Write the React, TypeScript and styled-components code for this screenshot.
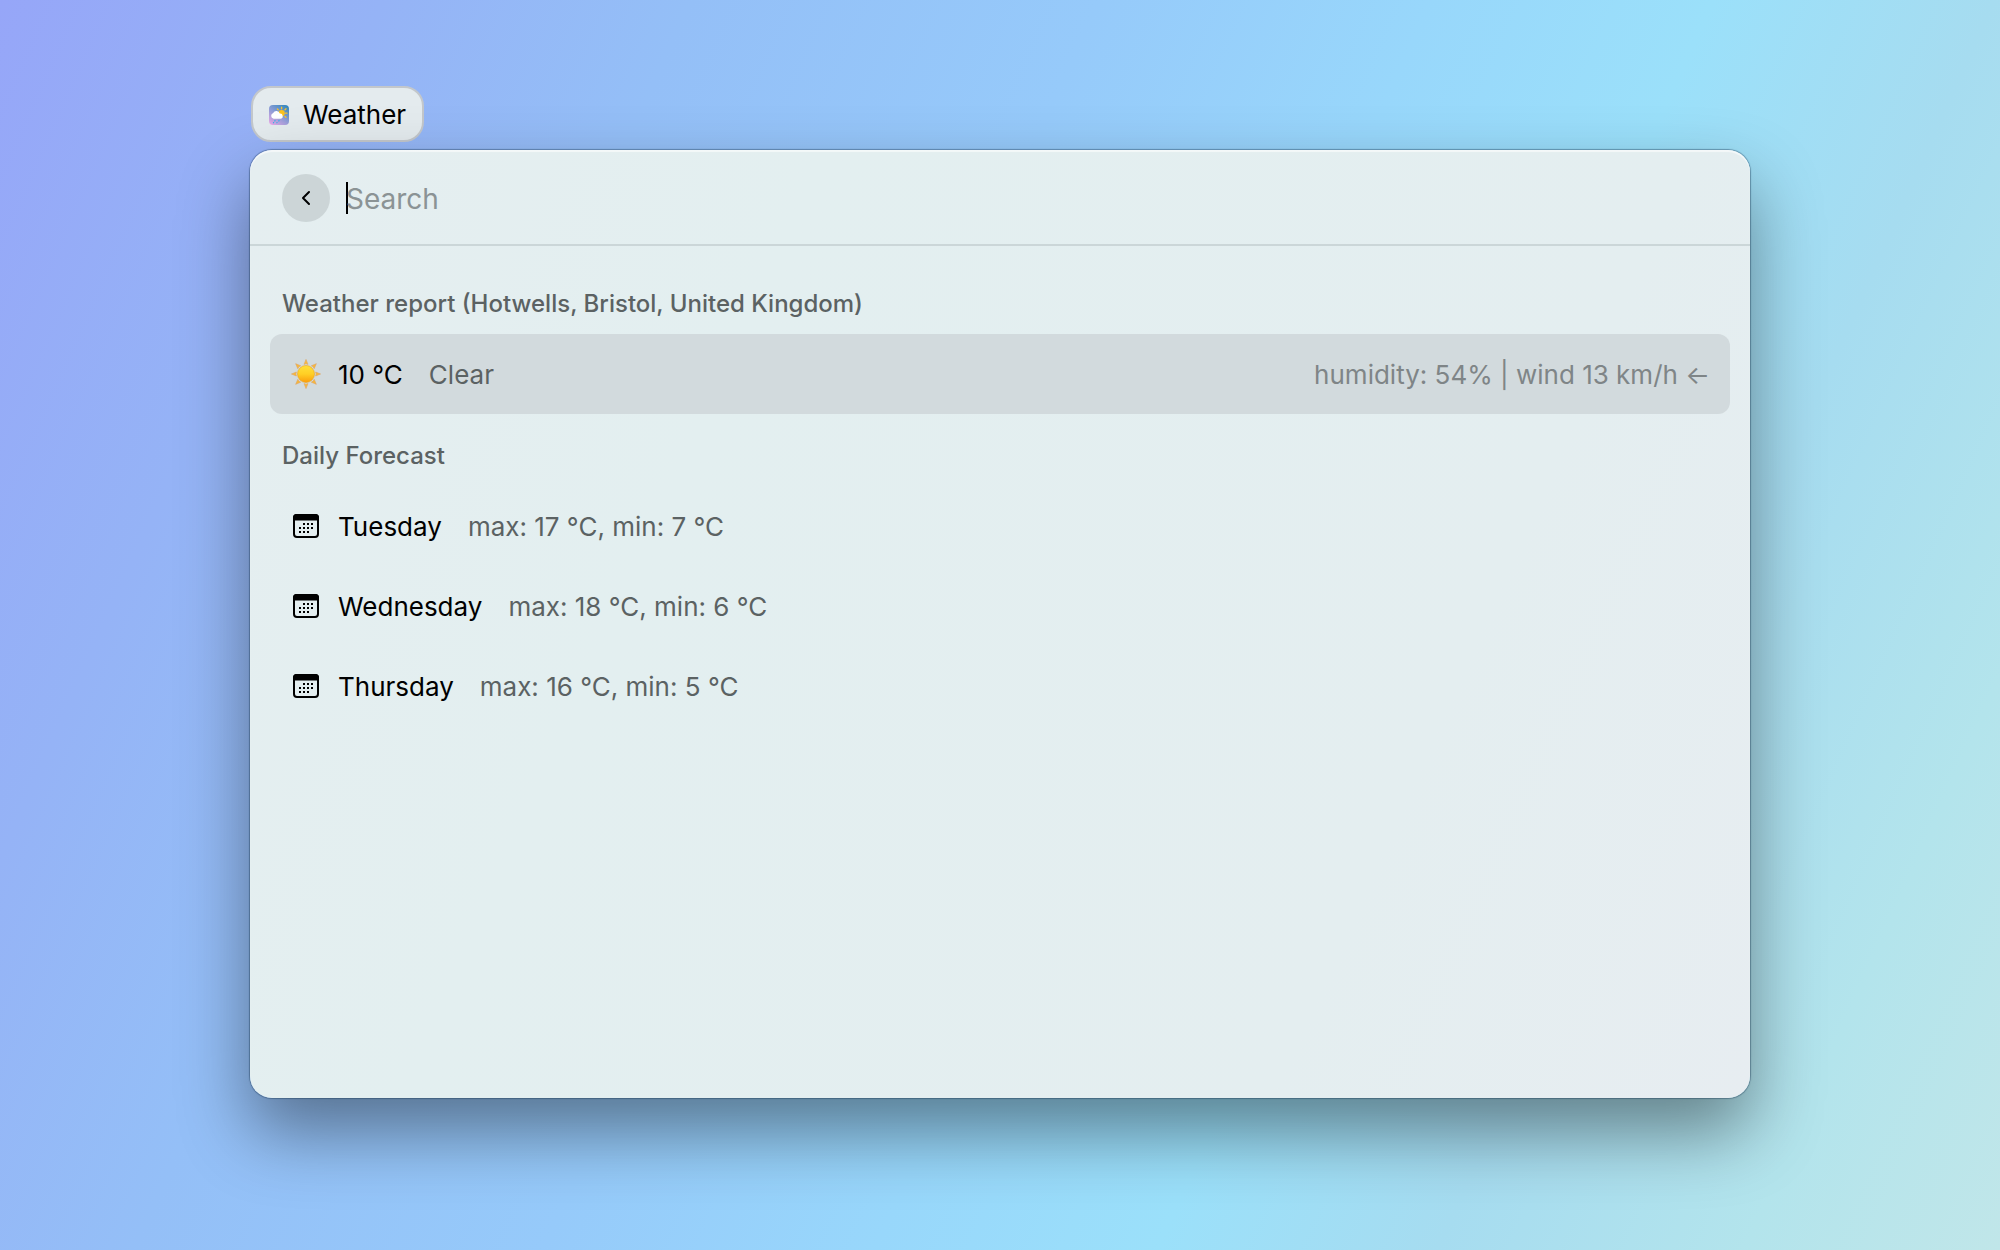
import React from 'react';
import styled, { createGlobalStyle } from 'styled-components';

const GlobalStyle = createGlobalStyle`
  * { box-sizing: border-box; }
  body { margin: 0; font-family: Inter, 'Liberation Sans', sans-serif; color: #000; }
  button, input { font: inherit; color: inherit; border: 0; background: none; padding: 0; margin: 0; }
`;

const Desktop = styled.main`
  min-height: 100vh;
  display: flex;
  flex-direction: column;
  align-items: flex-start;
  gap: 8px;
  padding: 86px 12.5% 152px;
  background: linear-gradient(114deg, #96a6f8 0%, #95b3f6 15%, #94bff7 27%, #96cafa 43%, #98d7fb 56%, #9be0fa 67%, #a6dcf0 78%, #b3e4ec 90%, #c0e6e9 100%);
`;

const ExtensionBadge = styled.div`
  display: flex;
  align-items: center;
  gap: 14px;
  height: 56px;
  margin-left: 1px;
  padding: 2px 16px 0;
  border: 2px solid #c3c7cb;
  border-radius: 20px;
  background: #e4ebee;
  font-size: 26px;
  line-height: 32px;
`;

const Panel = styled.section`
  flex: 1;
  width: 100%;
  border-radius: 22px;
  overflow: hidden;
  background: linear-gradient(114deg, #e5eef0 0%, #e3eff0 30%, #e4eef0 75%, #e7edf1 100%);
  box-shadow: 0 0 1px 1px rgba(20, 50, 80, 0.4), 0 34px 70px rgba(0, 0, 0, 0.42), inset 0 2px 1px rgba(255, 255, 255, 0.6);
`;

const Header = styled.header`
  display: flex;
  align-items: center;
  padding: 24px 32px 22px;
  border-bottom: 2px solid #cbd6d8;
`;

const BackButton = styled.button`
  display: grid;
  place-items: center;
  width: 48px;
  height: 48px;
  margin-right: 16px;
  border-radius: 50%;
  background: #ccd5d7;
`;

const Caret = styled.span`
  width: 2px;
  height: 32px;
  margin-right: -2px;
  background: #000;
`;

const SearchInput = styled.input`
  flex: 1;
  min-width: 0;
  padding-top: 2px;
  font-size: 28px;
  line-height: 34px;
  outline: none;
  &::placeholder { color: #8b9395; opacity: 1; }
`;

const Results = styled.div`
  padding: 16px 20px;
`;

const SectionTitle = styled.h2`
  margin: 0;
  padding: 26px 12px 14px;
  font-size: 24px;
  line-height: 32px;
  font-weight: 500;
  color: #5b6263;
`;

const List = styled.ul`
  margin: 0;
  padding: 0;
  list-style: none;
`;

const Row = styled.button<{ $selected?: boolean }>`
  display: flex;
  align-items: center;
  width: 100%;
  height: 80px;
  padding: 0 20px;
  border-radius: 12px;
  text-align: left;
  font-size: 26px;
  line-height: 32px;
  background: ${(p) => (p.$selected ? '#d2dadd' : 'transparent')};
`;

const RowText = styled.span`
  padding-top: 2px;
`;

const RowTitle = styled(RowText)`
  margin: 0 26px 0 16px;
`;

const RowSubtitle = styled(RowText)`
  color: #5b6263;
`;

const Accessory = styled(RowText)`
  margin-left: auto;
  color: #7f8587;
`;

const WeatherIcon = () => (
  <svg width="20" height="20" viewBox="0 0 20 20" aria-hidden="true">
    <defs>
      <linearGradient id="sky" x1="0.85" y1="0" x2="0.15" y2="1">
        <stop offset="0" stopColor="#3488bd" />
        <stop offset="0.5" stopColor="#8c9cd6" />
        <stop offset="1" stopColor="#e3a8e6" />
      </linearGradient>
    </defs>
    <rect width="20" height="20" rx="4" fill="url(#sky)" />
    <g stroke="#f8c428" strokeWidth="1.3" strokeLinecap="round">
      <path d="M12.6 2.2v1.6M8.4 4l.9.9M17 3.8l-1 1M18 8.2h-1.500M17 12.300l-1-.9" />
    </g>
    <circle cx="12.700" cy="8.200" r="3.100" fill="#fbc21d" />
    <path d="M4.600 13.800a3 3 0 0 1-.4-5.800 3.600 3.600 0 0 1 6.600.6 2.600 2.600 0 0 1 .6 5.200z" fill="#fff" />
    <g stroke="#2fb4ea" strokeWidth="1.200" strokeLinecap="round">
      <path d="M6 15.500l-.2.4M10 15.500l-.2.4M4.600 17.600l-.1.2M8 17.600l-.1.2" />
    </g>
  </svg>
);

const SunIcon = () => (
  <svg width="32" height="32" viewBox="0 0 32 32" aria-hidden="true">
    <defs>
      <linearGradient id="sun" x1="0" y1="0" x2="0" y2="1">
        <stop offset="0" stopColor="#ffe03a" />
        <stop offset="0.5" stopColor="#ffcf25" />
        <stop offset="1" stopColor="#fb9d0c" />
      </linearGradient>
    </defs>
    {[0, 45, 90, 135, 180, 225, 270, 315].map((angle) => (
      <path
        key={angle}
        d="M16 1.400l2 5q-2-1.100-4 0z"
        fill="#f9b936"
        stroke="#dda468"
        strokeWidth="0.6"
        transform={`rotate(${angle} 16 16)`}
      />
    ))}
    <circle cx="16" cy="16" r="8.500" fill="url(#sun)" stroke="#eda41c" strokeWidth="0.6" />
  </svg>
);

const calendarDots = [
  [14, 14], [18, 14], [22, 14],
  [10, 18], [14, 18], [18, 18], [22, 18],
  [10, 22], [14, 22], [18, 22],
];

const CalendarIcon = () => (
  <svg width="32" height="32" viewBox="0 0 32 32" aria-hidden="true">
    <rect x="4" y="5" width="24" height="22" rx="3" fill="none" stroke="#000" strokeWidth="2" />
    <path d="M3 10.400V7.500A3.500 3.500 0 0 1 6.500 4h19A3.500 3.500 0 0 1 29 7.500v2.900z" />
    {calendarDots.map(([x, y]) => (
      <rect key={`${x}-${y}`} x={x - 1} y={y - 1} width="2" height="2" />
    ))}
  </svg>
);

const forecast = [
  { day: 'Tuesday', range: 'max: 17 °C, min: 7 °C' },
  { day: 'Wednesday', range: 'max: 18 °C, min: 6 °C' },
  { day: 'Thursday', range: 'max: 16 °C, min: 5 °C' },
];

export default function App() {
  return (
    <>
      <GlobalStyle />
      <Desktop>
        <ExtensionBadge>
          <WeatherIcon />
          Weather
        </ExtensionBadge>
        <Panel>
          <Header>
            <BackButton type="button" aria-label="Back">
              <svg width="16" height="16" viewBox="0 0 16 16" fill="none" stroke="#000" strokeWidth="2" strokeLinecap="round" strokeLinejoin="round">
                <path d="M11 2L5 8l6 6" />
              </svg>
            </BackButton>
            <Caret />
            <SearchInput type="text" placeholder="Search" aria-label="Search" />
          </Header>
          <Results>
            <SectionTitle>Weather report (Hotwells, Bristol, United Kingdom)</SectionTitle>
            <List>
              <li>
                <Row type="button" $selected>
                  <SunIcon />
                  <RowTitle>10 °C</RowTitle>
                  <RowSubtitle>Clear</RowSubtitle>
                  <Accessory>humidity: 54% | wind 13 km/h ←</Accessory>
                </Row>
              </li>
            </List>
            <SectionTitle>Daily Forecast</SectionTitle>
            <List>
              {forecast.map(({ day, range }) => (
                <li key={day}>
                  <Row type="button">
                    <CalendarIcon />
                    <RowTitle>{day}</RowTitle>
                    <RowSubtitle>{range}</RowSubtitle>
                  </Row>
                </li>
              ))}
            </List>
          </Results>
        </Panel>
      </Desktop>
    </>
  );
}
